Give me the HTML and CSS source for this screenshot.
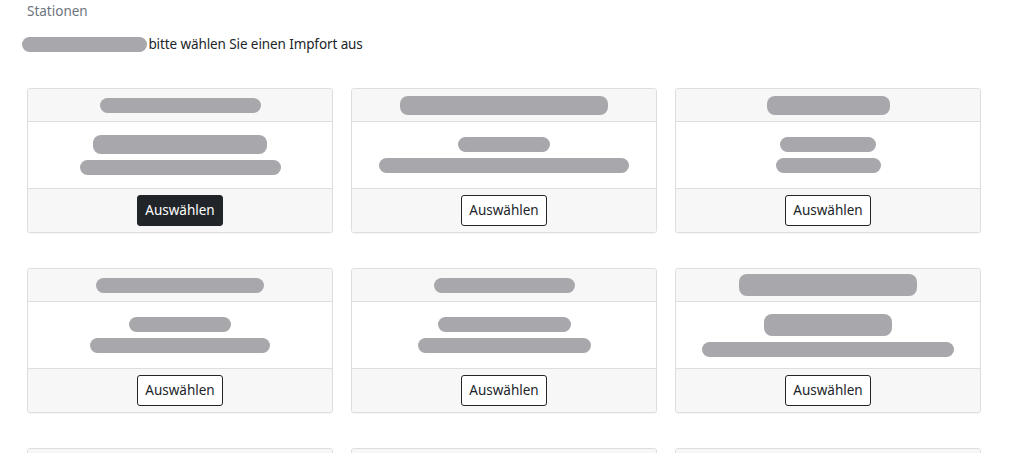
FILE: index.html
```html
<!DOCTYPE html>
<html lang="de">
<head>
<meta charset="utf-8">
<link rel="stylesheet" href="styles.css">
</head>
<body>
<div class="page">
  <div class="crumb">Stationen</div>
  <div class="intro"><span class="blob intro-blob"></span> bitte wählen Sie einen Impfort aus</div>
  <div class="grid">
    <div class="card">
      <div class="card-head"><span class="blob" style="width:161px"></span></div>
      <div class="card-body"><span class="blob tall" style="width:174px"></span><span class="blob" style="width:201px"></span></div>
      <div class="card-foot"><button class="btn btn-dark">Auswählen</button></div>
    </div>
    <div class="card">
      <div class="card-head"><span class="blob tall" style="width:208px"></span></div>
      <div class="card-body"><span class="blob" style="width:92px"></span><span class="blob" style="width:250px"></span></div>
      <div class="card-foot"><button class="btn">Auswählen</button></div>
    </div>
    <div class="card">
      <div class="card-head"><span class="blob tall" style="width:123px"></span></div>
      <div class="card-body"><span class="blob" style="width:96px"></span><span class="blob" style="width:105px"></span></div>
      <div class="card-foot"><button class="btn">Auswählen</button></div>
    </div>
    <div class="card">
      <div class="card-head"><span class="blob" style="width:168px"></span></div>
      <div class="card-body"><span class="blob" style="width:102px"></span><span class="blob" style="width:180px"></span></div>
      <div class="card-foot"><button class="btn">Auswählen</button></div>
    </div>
    <div class="card">
      <div class="card-head"><span class="blob" style="width:141px"></span></div>
      <div class="card-body"><span class="blob" style="width:133px"></span><span class="blob" style="width:173px"></span></div>
      <div class="card-foot"><button class="btn">Auswählen</button></div>
    </div>
    <div class="card">
      <div class="card-head"><span class="blob xtall" style="width:178px"></span></div>
      <div class="card-body"><span class="blob xtall" style="width:128px"></span><span class="blob" style="width:252px"></span></div>
      <div class="card-foot"><button class="btn">Auswählen</button></div>
    </div>
    <div class="card">
      <div class="card-head"></div>
    </div>
    <div class="card">
      <div class="card-head"></div>
    </div>
    <div class="card">
      <div class="card-head"></div>
    </div>
  </div>
</div>
</body>
</html>
```

FILE: styles.css
```css
html, body {
  margin: 0;
  padding: 0;
  background: #fff;
}
body {
  font-family: "Noto Sans", "Open Sans", sans-serif;
  font-size: 13.5px;
  color: #212529;
  overflow: hidden;
  height: 453px;
}
.page {
  padding: 0 49px 0 27px;
}
.crumb {
  color: #6c757d;
  line-height: 20px;
  padding-top: 1px;
  height: 22px;
}
.intro {
  display: flex;
  align-items: center;
  height: 22px;
  margin-top: 10px;
  margin-left: -5px;
  white-space: pre;
  letter-spacing: -0.1px;
}
.intro-blob {
  width: 125px;
  height: 17px;
  margin-right: -2px;
}
.grid {
  margin-top: 33px;
  display: grid;
  grid-template-columns: repeat(3, 306px);
  column-gap: 18px;
  row-gap: 35px;
}
.card {
  border: 1px solid #dedede;
  border-radius: 3px;
  background: #fff;
  box-shadow: 0 1px 1px rgba(0,0,0,0.04);
  overflow: hidden;
}
.card-head {
  background: #f7f7f7;
  height: 32px;
  border-bottom: 1px solid #dedede;
  display: flex;
  align-items: center;
  justify-content: center;
}
.card-body {
  height: 66px;
  display: flex;
  flex-direction: column;
  align-items: center;
  justify-content: center;
  gap: 6px;
}
.card-foot {
  background: #f7f7f7;
  border-top: 1px solid #dedede;
  height: 44px;
  display: flex;
  justify-content: center;
  align-items: flex-start;
  padding-top: 6px;
  box-sizing: border-box;
}
.blob {
  display: inline-block;
  height: 15px;
  border-radius: 8px;
  background: #a8a8ac;
}
.blob.tall { height: 19px; }
.blob.xtall { height: 22px; }
.btn {
  font-family: inherit;
  font-size: 13.5px;
  color: #212529;
  background: #fff;
  border: 1px solid #212529;
  border-radius: 3px;
  height: 31px;
  width: 86px;
  padding: 0;
  line-height: 29px;
}
.btn-dark {
  background: #212529;
  color: #fff;
}
```
